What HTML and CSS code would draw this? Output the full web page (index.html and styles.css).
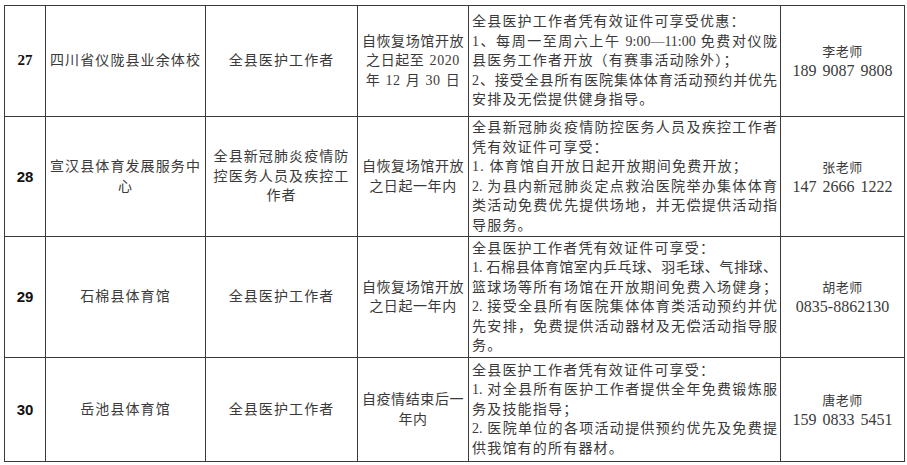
FILE: index.html
```html
<!DOCTYPE html>
<html lang="zh-CN">
<head>
<meta charset="utf-8">
<title>医护人员优惠场馆</title>
<link rel="stylesheet" href="styles.css">
</head>
<body>
<table class="sheet">
  <colgroup>
    <col class="c-no">
    <col class="c-name">
    <col class="c-who">
    <col class="c-time">
    <col class="c-detail">
    <col class="c-contact">
  </colgroup>
  <tbody>
    <tr class="r1">
      <td class="no no-serif">27</td>
      <td class="txt">四川省仪陇县业余体校</td>
      <td class="txt">全县医护工作者</td>
      <td class="txt time">自恢复场馆开放之日起至 2020 年 12 月 30 日</td>
      <td class="detail">
        <span class="ln">全县医护工作者凭有效证件可享受优惠：</span>
        <span class="ln j">1、每周一至周六上午 9:00—11:00 免费对仪陇</span>
        <span class="ln">县医务工作者开放（有赛事活动除外）；</span>
        <span class="ln j">2、接受全县所有医院集体体育活动预约并优先</span>
        <span class="ln">安排及无偿提供健身指导。</span>
      </td>
      <td class="contact"><span class="person">李老师</span><span class="phone">189 9087 9808</span></td>
    </tr>
    <tr class="r2">
      <td class="no">28</td>
      <td class="txt">宣汉县体育发展服务中心</td>
      <td class="txt">全县新冠肺炎疫情防控医务人员及疾控工作者</td>
      <td class="txt time">自恢复场馆开放之日起一年内</td>
      <td class="detail">
        <span class="ln j">全县新冠肺炎疫情防控医务人员及疾控工作者</span>
        <span class="ln">凭有效证件可享受：</span>
        <span class="ln">1. 体育馆自开放日起开放期间免费开放；</span>
        <span class="ln j">2. 为县内新冠肺炎定点救治医院举办集体体育</span>
        <span class="ln j">类活动免费优先提供场地，并无偿提供活动指</span>
        <span class="ln">导服务。</span>
      </td>
      <td class="contact"><span class="person">张老师</span><span class="phone">147 2666 1222</span></td>
    </tr>
    <tr class="r3">
      <td class="no">29</td>
      <td class="txt">石棉县体育馆</td>
      <td class="txt">全县医护工作者</td>
      <td class="txt time">自恢复场馆开放之日起一年内</td>
      <td class="detail">
        <span class="ln">全县医护工作者凭有效证件可享受：</span>
        <span class="ln j">1. 石棉县体育馆室内乒乓球、羽毛球、气排球、</span>
        <span class="ln j">篮球场等所有场馆在开放期间免费入场健身；</span>
        <span class="ln j">2. 接受全县所有医院集体体育类活动预约并优</span>
        <span class="ln j">先安排，免费提供活动器材及无偿活动指导服</span>
        <span class="ln">务。</span>
      </td>
      <td class="contact"><span class="person">胡老师</span><span class="phone">0835-8862130</span></td>
    </tr>
    <tr class="r4">
      <td class="no">30</td>
      <td class="txt">岳池县体育馆</td>
      <td class="txt">全县医护工作者</td>
      <td class="txt time">自疫情结束后一年内</td>
      <td class="detail">
        <span class="ln">全县医护工作者凭有效证件可享受：</span>
        <span class="ln j">1. 对全县所有医护工作者提供全年免费锻炼服</span>
        <span class="ln">务及技能指导；</span>
        <span class="ln j">2. 医院单位的各项活动提供预约优先及免费提</span>
        <span class="ln">供我馆有的所有器材。</span>
      </td>
      <td class="contact"><span class="person">唐老师</span><span class="phone">159 0833 5451</span></td>
    </tr>
  </tbody>
</table>
</body>
</html>
```

FILE: styles.css
```css
html, body {
  margin: 0;
  padding: 0;
  background: #ffffff;
}

body {
  font-family: "Liberation Serif", "Noto Sans CJK SC", serif;
  font-size: 14px;
  color: #3a3a3a;
}

.sheet {
  margin: 5px 0 0 4px;
  border-collapse: collapse;
  table-layout: fixed;
  width: 900px;
}

.c-no { width: 41px; }
.c-name { width: 160px; }
.c-who { width: 152px; }
.c-time { width: 111px; }
.c-detail { width: 312px; }
.c-contact { width: 124px; }

.sheet td {
  border: 1px solid #3a3a3a;
  vertical-align: middle;
  padding: 0 3px;
  line-height: 19.5px;
}

.r1 { height: 111px; }
.r2 { height: 120px; }
.r3 { height: 121px; }
.r4 { height: 104px; }

.no {
  text-align: center;
  font-family: "Liberation Sans", sans-serif;
  font-weight: bold;
  font-size: 15px;
  color: #111111;
}

.no-serif {
  font-family: "Liberation Serif", serif;
}

.txt {
  text-align: center;
  letter-spacing: 1.1px;
}

.sheet td.time {
  padding: 0;
  letter-spacing: 0.6px;
  word-spacing: 1px;
}

.detail {
  padding: 0 3px 0 2px;
  letter-spacing: 1.2px;
}

.ln {
  display: block;
  text-align: left;
}

.ln.j {
  letter-spacing: 0;
  text-align: justify;
  text-align-last: justify;
}

.contact {
  text-align: center;
}

.person {
  display: block;
  font-size: 13px;
  line-height: 19px;
  letter-spacing: 0.5px;
}

.phone {
  display: block;
  font-size: 16px;
  line-height: 19px;
  word-spacing: 2px;
}
```
